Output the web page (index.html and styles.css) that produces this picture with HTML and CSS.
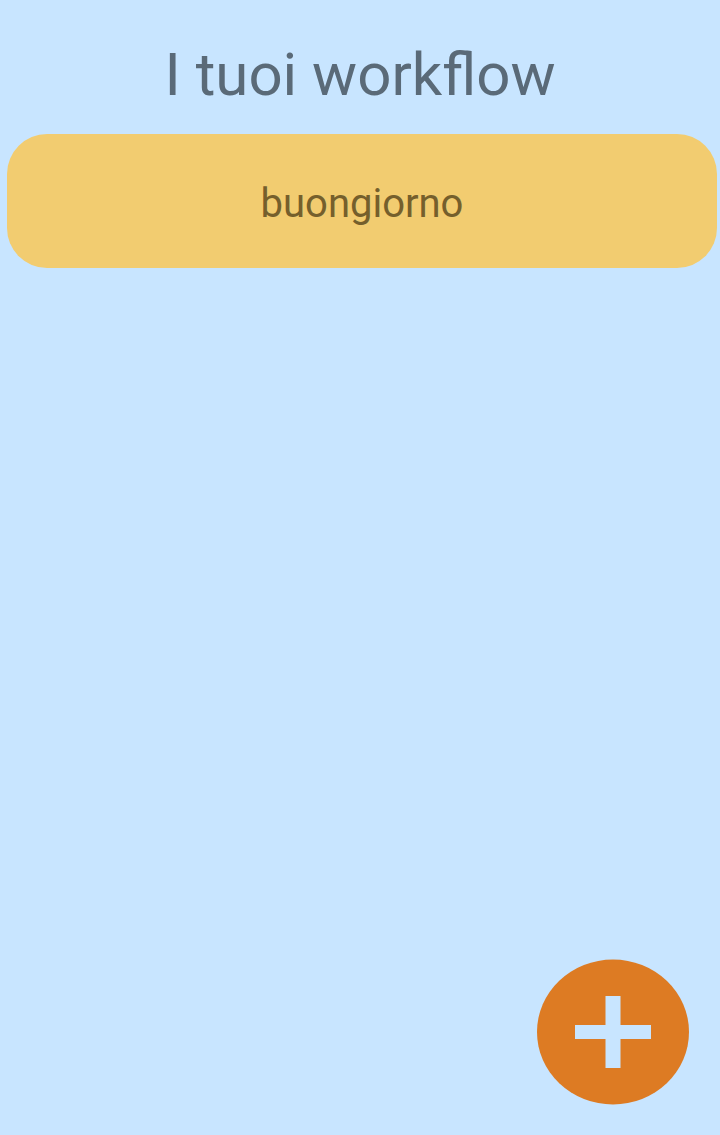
FILE: index.html
```html
<!DOCTYPE html>
<html lang="it">
<head>
<meta charset="utf-8">
<meta name="viewport" content="width=device-width, initial-scale=1">
<title>I tuoi workflow</title>
<link rel="stylesheet" href="styles.css">
</head>
<body>
<main class="screen">
  <h1 class="title">I tuoi workflow</h1>
  <div class="workflows">
    <button class="workflow" type="button">buongiorno</button>
  </div>
  <button class="add" type="button" aria-label="Aggiungi workflow">
    <svg class="add-icon" viewBox="0 0 152 146" aria-hidden="true">
      <ellipse cx="76" cy="73" rx="76" ry="72.5" fill="#dd7b23"/>
      <path d="M68.5 37h15v29H114v14H83.500v29h-15V80H38V66h30.500z" fill="#c8e5ff"/>
    </svg>
  </button>
</main>
</body>
</html>
```
FILE: styles.css
```css
body {
  margin: 0;
  background: #c8e5ff;
  font-family: Roboto, "Liberation Sans", sans-serif;
}

.screen {
  box-sizing: border-box;
  min-height: 100vh;
  display: flex;
  flex-direction: column;
  padding: 39px 0 30px;
}

.title {
  margin: 0 0 23px;
  color: #5a6a78;
  font-size: 60px;
  font-weight: 400;
  line-height: 72px;
  text-align: center;
}

.workflows {
  display: flex;
  flex-direction: column;
  gap: 8px;
  padding: 0 3px 0 7px;
}

.workflow {
  padding: 46px 24px 40px;
  border: 0;
  border-radius: 40px;
  background: #f2cc70;
  color: #755f2c;
  font-family: inherit;
  font-size: 40px;
  line-height: 48px;
  text-align: center;
}

.add {
  margin: auto 31px 0 auto;
  padding: 0;
  border: 0;
  background: none;
}

.add-icon {
  display: block;
  width: 152px;
  height: 146px;
}
```
